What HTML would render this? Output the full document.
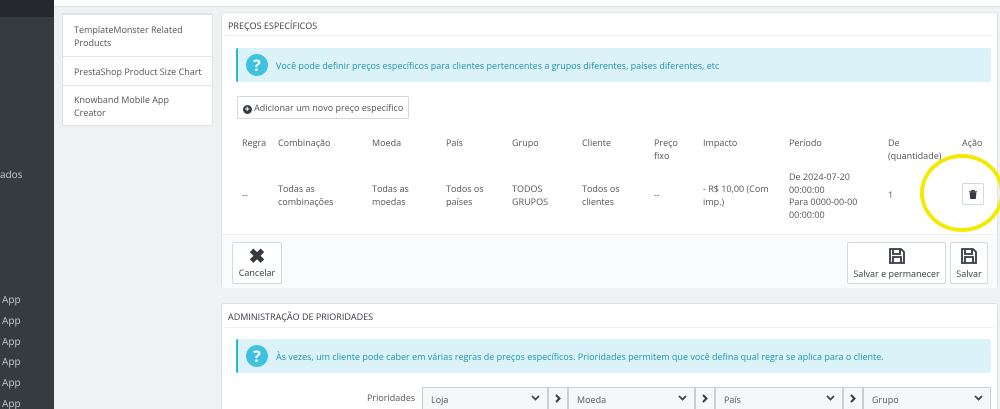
<!DOCTYPE html><html><head><meta charset="utf-8"><style>
*{box-sizing:border-box;margin:0;padding:0}
html{width:1000px;height:409px;overflow:hidden}
body{width:1000px;height:409px;overflow:hidden;background:#eff1f2;font-family:"Open Sans","Liberation Sans",sans-serif;font-size:9px;color:#555;position:relative}
.abs{position:absolute}
.side{left:0;top:0;width:54px;height:409px;background:#363a41}
.sidetop{left:0;top:0;width:54px;height:17px;background:#25282c}
.topbar{left:54px;top:0;width:946px;height:7px;background:#fff;border-bottom:1px solid #dfe3e6}
.st{color:#c8cbd0;font-size:10px;left:2px}
.lp{left:62px;top:13px;width:151px;height:113px;background:#fff;border:1px solid #dfe3e6;border-radius:2px}
.li{position:absolute;left:0;width:149px;border-top:1px solid #e4e6e8;padding-left:11px;color:#555;font-size:9px;line-height:13px}
.panel{background:#fff;border:1px solid #dfe3e6;border-radius:3px}
.ph{position:absolute;left:6px;font-size:9px;color:#363a41;text-transform:uppercase}
.hr{position:absolute;left:3px;right:3px;height:1px;background:#eef0f1}
.alert{position:absolute;background:#dbf3f8;border-left:2px solid #25b9d7;color:#1f95ad;font-size:9px;border-radius:2px}
.q{position:absolute;left:8px;width:22px;height:22px;border-radius:50%;background:#3ec2e0;color:#fff;font-weight:bold;font-size:16px;text-align:center;line-height:22px}
.btn{position:absolute;background:#fff;border:1px solid #d5d9dc;border-radius:2px;color:#363a41;font-size:9px;text-align:center}
.t{position:absolute;font-size:9px;line-height:12.5px;color:#555}
.sel{position:absolute;top:387px;height:22px;border:1px solid #c8d0d4;border-bottom:none;background:#f5f8f9;font-size:9px;color:#555;padding:5px 8px}
.sel svg{position:absolute;right:7px;top:7px}
.ar{position:absolute;top:387px;width:20px;height:22px;border:1px solid #c8d0d4;border-bottom:none;background:#f5f8f9;text-align:center}
.ar svg{margin-top:6px}
</style></head><body>
<div class="abs side"></div><div class="abs sidetop"></div>
<div class="abs topbar"></div>
<div class="abs st" style="top:167px;left:0">ados</div>
<div class="abs st" style="top:292px">App</div><div class="abs st" style="top:313px">App</div><div class="abs st" style="top:334px">App</div><div class="abs st" style="top:354px">App</div><div class="abs st" style="top:375px">App</div><div class="abs st" style="top:396px;height:13px;overflow:hidden">App</div>

<div class="abs lp">
<div class="li" style="top:0;height:42px;padding-top:8px">TemplateMonster Related<br>Products</div>
<div class="li" style="top:42px;height:29px;padding-top:8px">PrestaShop Product Size Chart</div>
<div class="li" style="top:71px;height:41px;padding-top:7px">Knowband Mobile App<br>Creator</div>
</div>

<div class="abs panel" style="left:221px;top:12px;width:777px;height:276px">
<div class="ph" style="top:6px">Preços específicos</div>
<div class="hr" style="top:22px"></div>
<div class="alert" style="left:14px;top:35px;width:755px;height:34px"><div class="q" style="top:6px">?</div><div style="position:absolute;left:38px;top:11px">Você pode definir preços específicos para clientes pertencentes a grupos diferentes, países diferentes, etc</div></div>
<div class="btn" style="left:15px;top:83px;width:172px;height:23px;line-height:21px;color:#555">
<span style="display:inline-block;width:9px;height:9px;border-radius:50%;background:#363a41;color:#fff;font-size:9px;line-height:8px;font-weight:bold;vertical-align:-1px">+</span> Adicionar um novo preço específico</div>
<div class="t" style="left:20px;top:124px">Regra</div>
<div class="t" style="left:56px;top:124px">Combinação</div>
<div class="t" style="left:150px;top:124px">Moeda</div>
<div class="t" style="left:224px;top:124px">País</div>
<div class="t" style="left:290px;top:124px">Grupo</div>
<div class="t" style="left:360px;top:124px">Cliente</div>
<div class="t" style="left:432px;top:124px">Preço<br>fixo</div>
<div class="t" style="left:481px;top:124px">Impacto</div>
<div class="t" style="left:567px;top:124px">Período</div>
<div class="t" style="left:666px;top:124px">De<br>(quantidade)</div>
<div class="t" style="left:740px;top:124px">Ação</div>
<div class="t" style="left:20px;top:176px">--</div>
<div class="t" style="left:56px;top:170px">Todas as<br>combinações</div>
<div class="t" style="left:150px;top:170px">Todas as<br>moedas</div>
<div class="t" style="left:224px;top:170px">Todos os<br>países</div>
<div class="t" style="left:290px;top:170px">TODOS<br>GRUPOS</div>
<div class="t" style="left:360px;top:170px">Todos os<br>clientes</div>
<div class="t" style="left:432px;top:176px">--</div>
<div class="t" style="left:481px;top:170px">- R$ 10,00 (Com<br>imp.)</div>
<div class="t" style="left:567px;top:158px">De 2024-07-20<br>00:00:00<br>Para 0000-00-00<br>00:00:00</div>
<div class="t" style="left:666px;top:176px">1</div>
<div class="btn" style="left:740px;top:170px;width:22px;height:22px"><svg width="8" height="9" viewBox="0 0 8 9" style="margin-top:6px"><path d="M0 1.5h8M2.5 1.5V0h3v1.5M1 2.5h6l-.6 6.5H1.6z" fill="#363a41" stroke="#363a41" stroke-width=".8"/></svg></div>
<div class="abs" style="left:0;top:221px;width:775px;height:54px;background:#fafbfc;border-top:1px solid #eef0f1"></div>
<div class="btn" style="left:10px;top:229px;width:50px;height:42px"><div style="font-size:20px;font-weight:bold;line-height:20px;margin-top:3px">✖</div><div>Cancelar</div></div>
<div class="btn" style="left:625px;top:229px;width:99px;height:42px"><svg width="18" height="18" viewBox="0 0 18 18" style="margin-top:4px"><path d="M2 2h11l3 3v11H2z M5 2v5h7V2 M5 10h8v6H5z" fill="none" stroke="#363a41" stroke-width="1.8"/></svg><div style="margin-top:-1px">Salvar e permanecer</div></div>
<div class="btn" style="left:728px;top:229px;width:38px;height:42px"><svg width="18" height="18" viewBox="0 0 18 18" style="margin-top:4px"><path d="M2 2h11l3 3v11H2z M5 2v5h7V2 M5 10h8v6H5z" fill="none" stroke="#363a41" stroke-width="1.8"/></svg><div style="margin-top:-1px">Salvar</div></div>
</div>

<div class="abs panel" style="left:221px;top:303px;width:777px;height:106px;border-bottom:none;border-radius:3px 3px 0 0">
<div class="ph" style="top:6px">Administração de prioridades</div>
<div class="hr" style="top:23px"></div>
<div class="alert" style="left:14px;top:35px;width:755px;height:34px"><div class="q" style="top:6px">?</div><div style="position:absolute;left:38px;top:11px">Às vezes, um cliente pode caber em várias regras de preços específicos. Prioridades permitem que você defina qual regra se aplica para o cliente.</div></div>
</div>
<div class="t" style="left:367px;top:392px">Prioridades</div>
<div class="sel" style="left:422px;width:126px">Loja<svg width="9" height="6"><path d="M1 1l3.5 3.5L8 1" fill="none" stroke="#444" stroke-width="1.8"/></svg></div>
<div class="ar" style="left:548px"><svg width="6" height="9"><path d="M1 1l3.5 3.5L1 8" fill="none" stroke="#363a41" stroke-width="2"/></svg></div>
<div class="sel" style="left:568px;width:127px">Moeda<svg width="9" height="6"><path d="M1 1l3.5 3.5L8 1" fill="none" stroke="#444" stroke-width="1.8"/></svg></div>
<div class="ar" style="left:695px"><svg width="6" height="9"><path d="M1 1l3.5 3.5L1 8" fill="none" stroke="#363a41" stroke-width="2"/></svg></div>
<div class="sel" style="left:715px;width:128px">País<svg width="9" height="6"><path d="M1 1l3.5 3.5L8 1" fill="none" stroke="#444" stroke-width="1.8"/></svg></div>
<div class="ar" style="left:843px"><svg width="6" height="9"><path d="M1 1l3.5 3.5L1 8" fill="none" stroke="#363a41" stroke-width="2"/></svg></div>
<div class="sel" style="left:863px;width:128px">Grupo<svg width="9" height="6"><path d="M1 1l3.5 3.5L8 1" fill="none" stroke="#444" stroke-width="1.8"/></svg></div>

<svg class="abs" style="left:912px;top:152px" width="92" height="84"><ellipse cx="50" cy="41" rx="40" ry="37" fill="none" stroke="#f4ea00" stroke-width="4"/></svg>
</body></html>
